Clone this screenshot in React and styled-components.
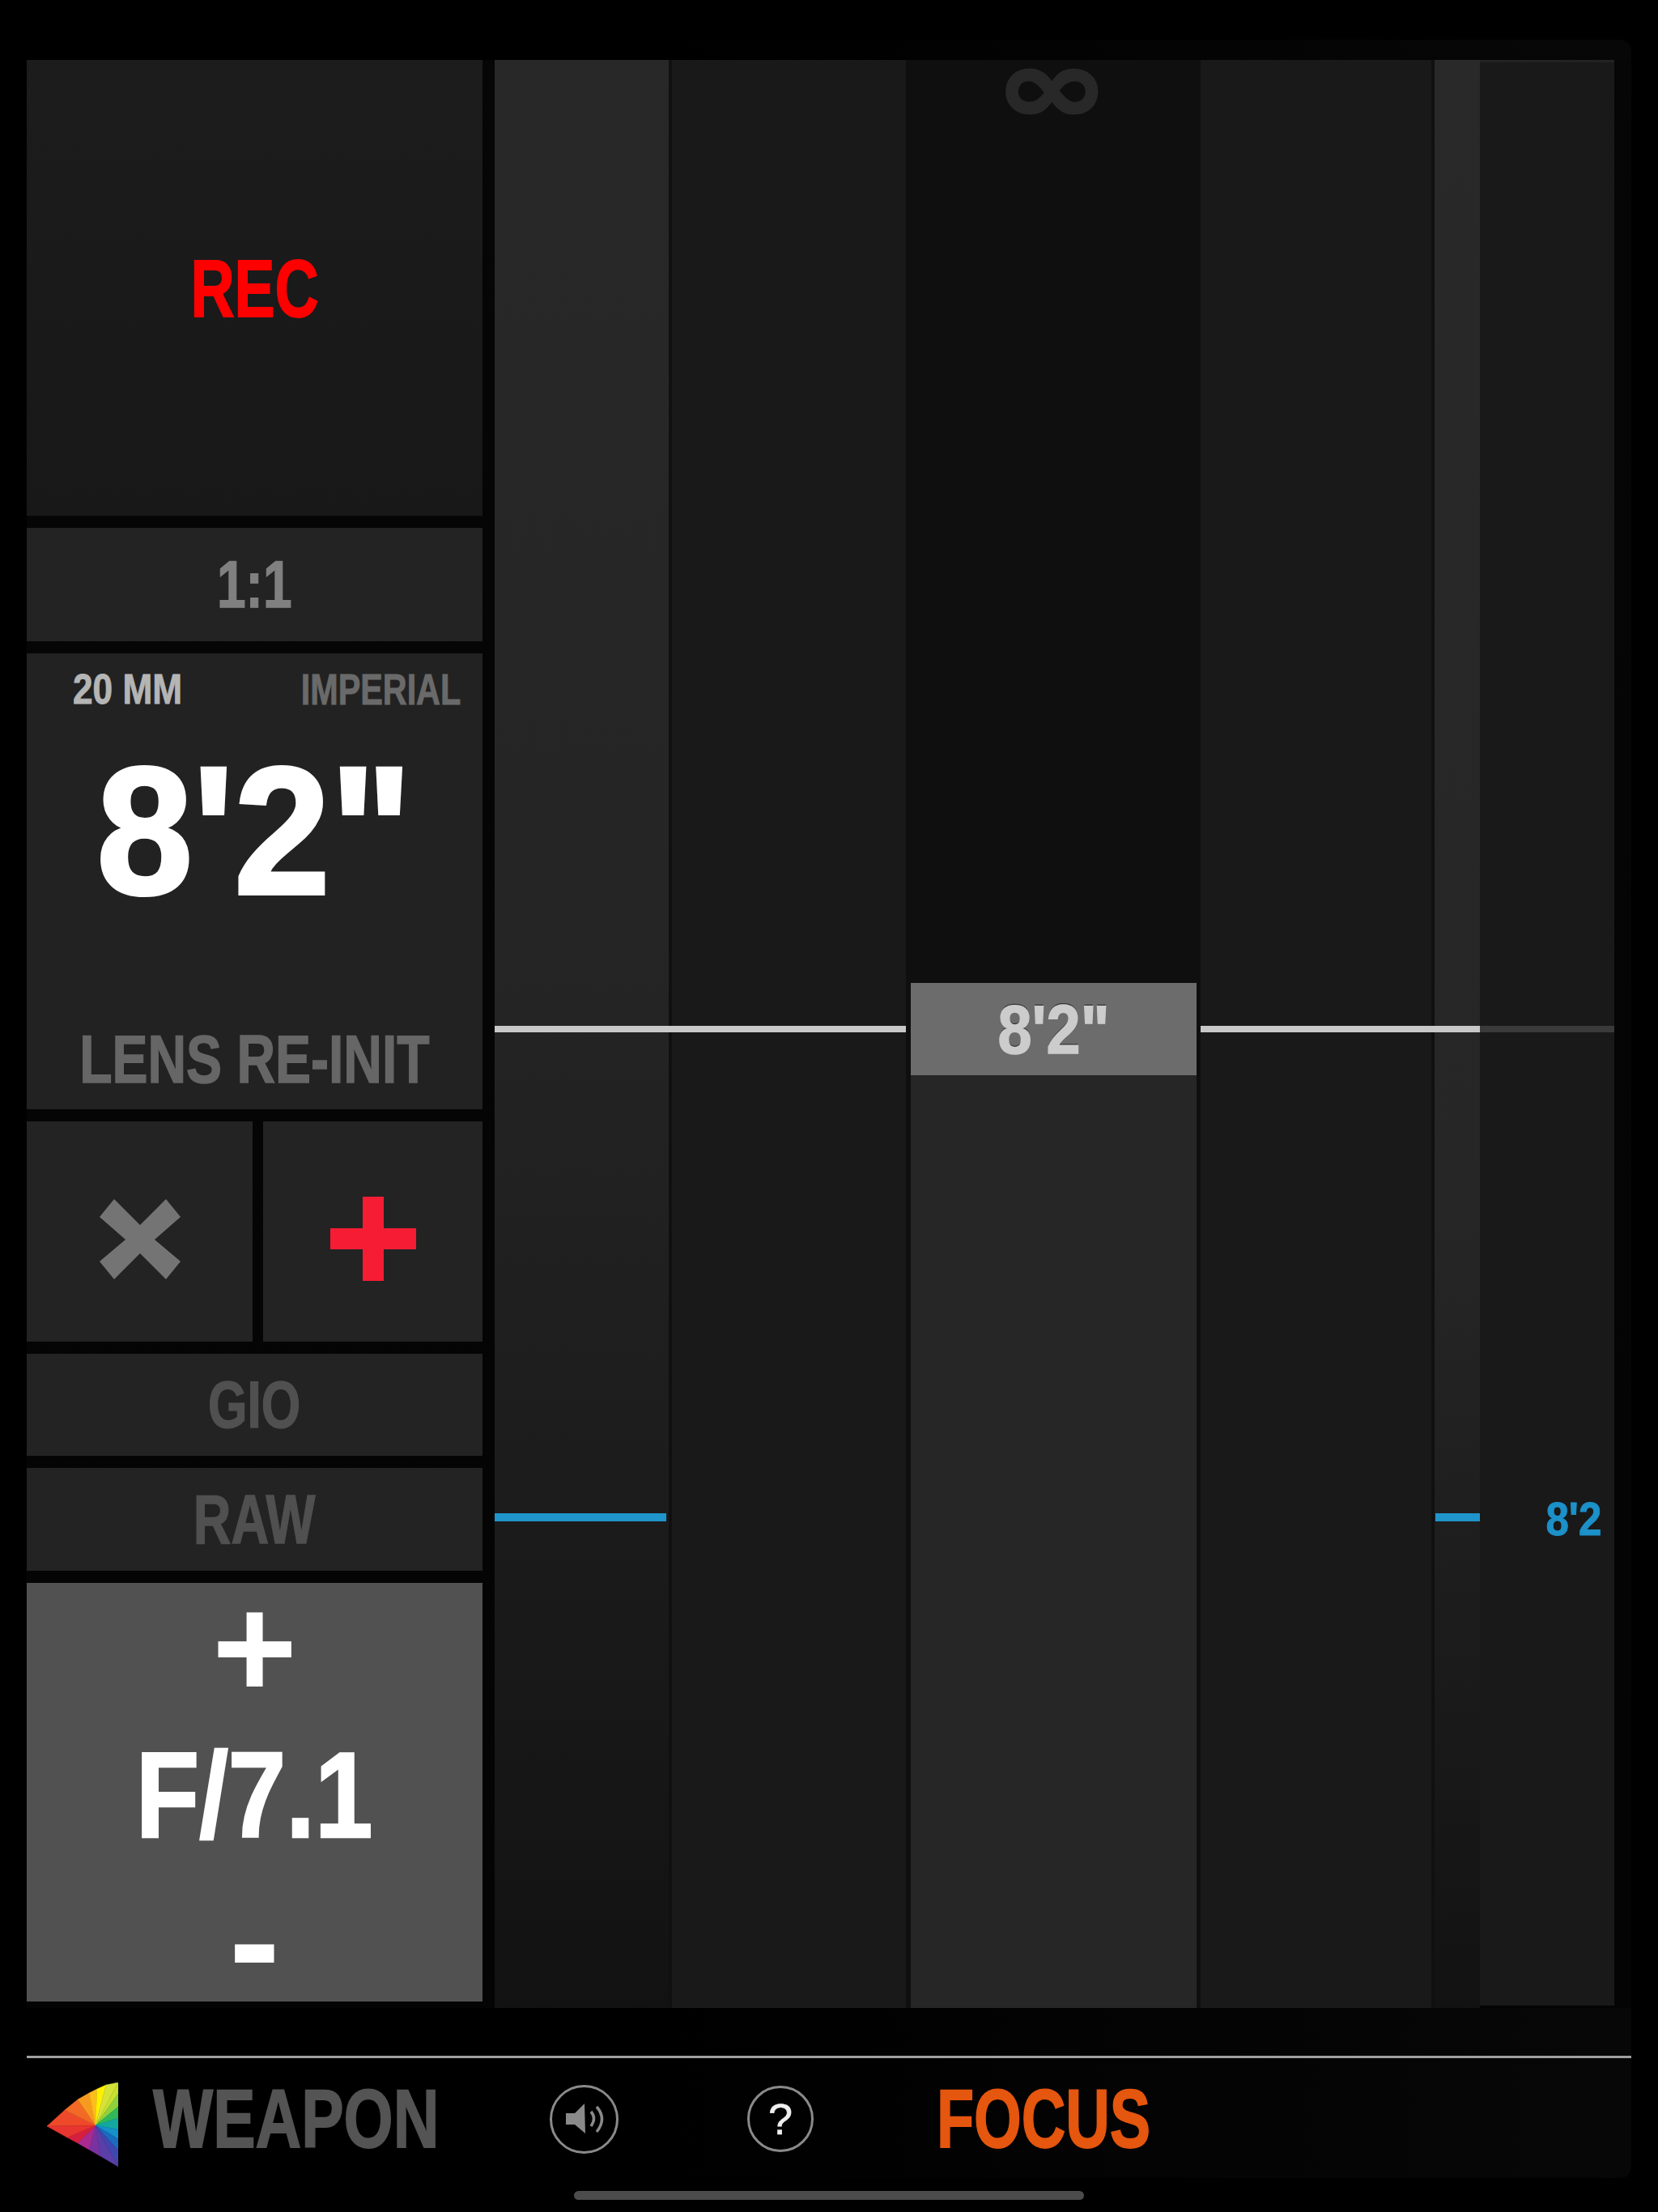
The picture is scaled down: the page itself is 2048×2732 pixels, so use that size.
import styled, { createGlobalStyle } from "styled-components";

const GlobalStyle = createGlobalStyle`
  html, body {
    margin: 0;
    padding: 0;
    background: #000;
  }
  body {
    font-family: "Liberation Sans", Arial, sans-serif;
    font-weight: 700;
  }
`;

const Page = styled.div`
  width: 2048px;
  height: 2732px;
  padding: 49px 33px 0;
  box-sizing: border-box;
  overflow: hidden;
  background: #000;
`;

const Shell = styled.div`
  width: 1982px;
  height: 2641px;
  box-sizing: border-box;
  padding-top: 25px;
  border-radius: 0 14px 14px 0;
  background: linear-gradient(90deg, #000 40%, #070707 100%);
`;

const Main = styled.div`
  display: flex;
  height: 2406px;
  background: linear-gradient(180deg, #060606, #040404);
`;

const Sidebar = styled.div`
  display: flex;
  flex-direction: column;
  gap: 15px;
  width: 563px;
  margin-right: 15px;
  flex: none;
`;

const Tile = styled.div`
  display: flex;
  align-items: center;
  justify-content: center;
  height: ${(p) => p.$h}px;
  flex: none;
  background: ${(p) => p.$bg || "#232323"};
`;

const Text = styled.span`
  display: inline-block;
  flex: none;
  font-size: ${(p) => p.$size}px;
  line-height: ${(p) => (p.$lh ? `${p.$lh}px` : 1)};
  white-space: nowrap;
  color: ${(p) => p.$color};
  -webkit-text-stroke: ${(p) => p.$stroke ?? 0.018}em ${(p) => p.$color};
  transform: scaleX(${(p) => p.$x});
  transform-origin: ${(p) => p.$origin || "center"};
`;

const InfoPanel = styled.div`
  display: flex;
  flex-direction: column;
  height: 563px;
  flex: none;
  box-sizing: border-box;
  padding: 18px 27px 20px 57px;
  background: #222;
`;

const InfoTop = styled.div`
  display: flex;
  justify-content: space-between;
  align-items: flex-start;
`;

const BigValue = styled.div`
  margin: 36px -27px 0 -57px;
  text-align: center;
`;

const ReInit = styled.div`
  margin: auto -27px 0 -57px;
  text-align: center;
`;

const ButtonRow = styled.div`
  display: flex;
  gap: 13px;
  height: 272px;
  flex: none;
`;

const IconTile = styled.div`
  display: flex;
  align-items: center;
  justify-content: center;
  width: ${(p) => p.$w}px;
  padding-top: 18px;
  box-sizing: border-box;
  background: #232323;
`;

const ApertureTile = styled.div`
  display: flex;
  flex-direction: column;
  align-items: center;
  height: 517px;
  flex: none;
  background: #515151;
`;

const ApertureStep = styled.div`
  margin-top: ${(p) => p.$top}px;
  flex: none;
`;

const Tracks = styled.div`
  display: flex;
  width: 1383px;
  height: 2406px;
  flex: none;
`;

const Column = styled.div`
  position: relative;
  width: ${(p) => p.$w}px;
  flex: none;
  background: ${(p) => p.$bg};
`;

const CenterColumn = styled.div`
  display: flex;
  flex-direction: column;
  width: 364px;
  flex: none;
  background: #0f0f0f;
`;

const CenterTop = styled.div`
  display: flex;
  justify-content: center;
  height: 1140px;
  flex: none;
`;

const InfinityMark = styled.span`
  margin-right: 4px;
  font-family: "DejaVu Sans", sans-serif;
  font-weight: 700;
  font-size: 142px;
  line-height: 66px;
  height: 66px;
  color: #282828;
  -webkit-text-stroke: 3px #282828;
  transform: scale(1.2, 0.92);
`;

const ReadoutBox = styled.div`
  display: flex;
  align-items: center;
  justify-content: center;
  height: 114px;
  flex: none;
  margin: 0 5px 0 6px;
  background: #6c6c6c;
`;

const ReadoutText = styled(Text)`
  text-shadow: 0 -2px 0 #333;
`;

const CenterBottom = styled.div`
  flex: 1;
  margin: 0 5px 0 6px;
  background: #262626;
`;

const RightPanel = styled.div`
  position: relative;
  width: 166px;
  flex: none;
  height: 2403px;
  box-sizing: border-box;
  border-top: 3px solid #222;
  background: #191919;
`;

const FocusLine = styled.div`
  position: absolute;
  left: 0;
  right: 0;
  top: ${(p) => p.$top}px;
  height: 8px;
  background: ${(p) => (p.$dim ? "#3a3a3a" : "#c8c8c8")};
`;

const DepthTick = styled.div`
  position: absolute;
  top: 1795px;
  left: ${(p) => p.$left}px;
  width: ${(p) => p.$w}px;
  height: 10px;
  background: #1f95cc;
`;

const DepthLabel = styled.div`
  position: absolute;
  top: 1770px;
  right: 16px;
`;

const Footer = styled.div`
  display: flex;
  align-items: center;
  height: 145px;
  margin-top: 59px;
  padding-top: 8px;
  box-sizing: border-box;
  border-top: 3px solid #a0a0a0;
`;

const LogoMark = styled.svg`
  width: 88px;
  height: 104px;
  margin: 13px 0 0 25px;
  flex: none;
`;

const Brand = styled.div`
  width: 463px;
  margin-left: 43px;
  flex: none;
`;

const RoundButton = styled.div`
  display: flex;
  align-items: center;
  justify-content: center;
  width: ${(p) => p.$d}px;
  height: ${(p) => p.$d}px;
  margin-left: ${(p) => p.$left}px;
  flex: none;
  box-sizing: border-box;
  border-radius: 50%;
  border: 3.5px solid #8a8a8a;
`;

const SpeakerIcon = styled.svg`
  width: 84px;
  height: 84px;
  flex: none;
`;

const Question = styled.span`
  font-weight: 400;
  font-size: 54px;
  line-height: 1;
  color: #eee;
  -webkit-text-stroke: 0.6px #eee;
`;

const ModeLabel = styled.div`
  width: 367px;
  margin-left: 152px;
  flex: none;
`;

const HomeBar = styled.div`
  width: 630px;
  height: 11px;
  margin: 16px auto 0;
  border-radius: 6px;
  background: #4c4c4c;
`;

const wedges = [
  ["0,54", "22,34", "#ee4a2a"],
  ["22,34", "38,21", "#f26a25"],
  ["38,21", "52,13", "#f79a20"],
  ["52,13", "62,8", "#fdbd1c"],
  ["62,8", "73,3", "#fff000"],
  ["73,3", "88,0", "#d5e23a"],
  ["88,0", "88,14", "#c8e02f"],
  ["88,14", "88,30", "#8fd13c"],
  ["88,30", "88,44", "#2fb95a"],
  ["88,44", "88,58", "#12a8a0"],
  ["88,58", "88,70", "#1590c8"],
  ["88,70", "88,84", "#1a6cc0"],
  ["88,84", "88,104", "#3f48b0"],
  ["88,104", "66,91", "#5b3fa8"],
  ["66,91", "52,83", "#7a32a0"],
  ["52,83", "38,75", "#a82a90"],
  ["38,75", "25,68", "#d61f3e"],
  ["25,68", "0,54", "#e8352f"],
];

const edgeRight = "linear-gradient(270deg, #101010 4px, transparent 4px)";
const edgeLeft = "linear-gradient(90deg, #101010 4px, transparent 4px)";

const App = () => {
  return (
    <Page>
      <GlobalStyle />
      <Shell>
        <Main>
          <Sidebar>
            <Tile $h={563} $bg="linear-gradient(180deg, #1c1c1c, #181818)">
              <Text $size={100} $x={0.75} $color="#ff0000">REC</Text>
            </Tile>
            <Tile $h={140}>
              <Text $size={82} $x={0.78} $color="#808080">1:1</Text>
            </Tile>
            <InfoPanel>
              <InfoTop>
                <Text $size={52} $x={0.85} $origin="left" $color="#b5b5b5">20 MM</Text>
                <Text $size={53} $x={0.78} $origin="right" $color="#6a6a6a">IMPERIAL</Text>
              </InfoTop>
              <BigValue>
                <Text $size={225} $x={0.95} $color="#fff">8'2"</Text>
              </BigValue>
              <ReInit>
                <Text $size={84} $x={0.785} $color="#666">LENS RE-INIT</Text>
              </ReInit>
            </InfoPanel>
            <ButtonRow>
              <IconTile $w={279}>
                <svg width="100" height="99" viewBox="0 0 100 99">
                  <path d="M18 0 L50 32 L82 0 L100 22 L68 50 L100 77 L82 99 L50 67 L18 99 L0 77 L32 50 L0 22 Z" fill="#747474" />
                </svg>
              </IconTile>
              <IconTile $w={271}>
                <svg width="106" height="104" viewBox="0 0 106 104">
                  <path d="M40 0 H66 V39 H106 V65 H66 V104 H40 V65 H0 V39 H40 Z" fill="#f61c34" />
                </svg>
              </IconTile>
            </ButtonRow>
            <Tile $h={126}>
              <Text $size={82} $x={0.76} $color="#505050">GIO</Text>
            </Tile>
            <Tile $h={127}>
              <Text $size={85} $x={0.76} $color="#505050">RAW</Text>
            </Tile>
            <ApertureTile>
              <ApertureStep $top={34}>
                <Text $size={180} $lh={92} $x={1} $stroke={0} $color="#fff">+</Text>
              </ApertureStep>
              <ApertureStep $top={40}>
                <Text $size={151} $lh={151} $x={0.85} $color="#fff">F/7.1</Text>
              </ApertureStep>
              <ApertureStep $top={64}>
                <Text $size={190} $lh={80} $x={1} $stroke={0} $color="#fff">-</Text>
              </ApertureStep>
            </ApertureTile>
          </Sidebar>
          <Tracks>
            <Column $w={219} $bg={`${edgeRight}, linear-gradient(180deg, #282828 0%, #252525 45%, #1d1d1d 70%, #121212 100%)`}>
              <FocusLine $top={1193} />
              <DepthTick $left={0} $w={212} />
            </Column>
            <Column $w={289} $bg="#191919">
              <FocusLine $top={1193} />
            </Column>
            <CenterColumn>
              <CenterTop>
                <InfinityMark>∞</InfinityMark>
              </CenterTop>
              <ReadoutBox>
                <ReadoutText $size={85} $x={0.89} $color="#ccc">8'2"</ReadoutText>
              </ReadoutBox>
              <CenterBottom />
            </CenterColumn>
            <Column $w={285} $bg="#191919">
              <FocusLine $top={1193} />
            </Column>
            <Column $w={60} $bg={`${edgeLeft}, linear-gradient(180deg, #292929 0%, #262626 60%, #121212 100%)`}>
              <FocusLine $top={1193} />
              <DepthTick $left={5} $w={55} />
            </Column>
            <RightPanel>
              <FocusLine $top={1190} $dim />
              <DepthLabel>
                <Text $size={58} $x={0.88} $origin="right" $color="#1c90c8">8'2</Text>
              </DepthLabel>
            </RightPanel>
          </Tracks>
        </Main>
        <Footer>
          <LogoMark viewBox="0 0 88 104">
            {wedges.map(([from, to, color]) => (
              <polygon key={from} points={`60,53 ${from} ${to}`} fill={color} stroke={color} strokeWidth="0.4" />
            ))}
          </LogoMark>
          <Brand>
            <Text $size={102} $x={0.77} $origin="left" $color="#545454">WEAPON</Text>
          </Brand>
          <RoundButton $d={85} $left={27}>
            <SpeakerIcon viewBox="0 0 84 84">
              <path d="M19 35 H30 L42 23 L43 60 L30 49 H19 Z" fill="#8a8a8a" />
              <path d="M50 33 Q57 41 50 51" fill="none" stroke="#8a8a8a" strokeWidth="3.5" />
              <path d="M57 27 Q70 42 57 58" fill="none" stroke="#8a8a8a" strokeWidth="3.5" />
            </SpeakerIcon>
          </RoundButton>
          <RoundButton $d={82} $left={159}>
            <Question>?</Question>
          </RoundButton>
          <ModeLabel>
            <Text $size={102} $x={0.74} $origin="left" $color="#e5560e">FOCUS</Text>
          </ModeLabel>
        </Footer>
      </Shell>
      <HomeBar />
    </Page>
  );
};

export default App;
